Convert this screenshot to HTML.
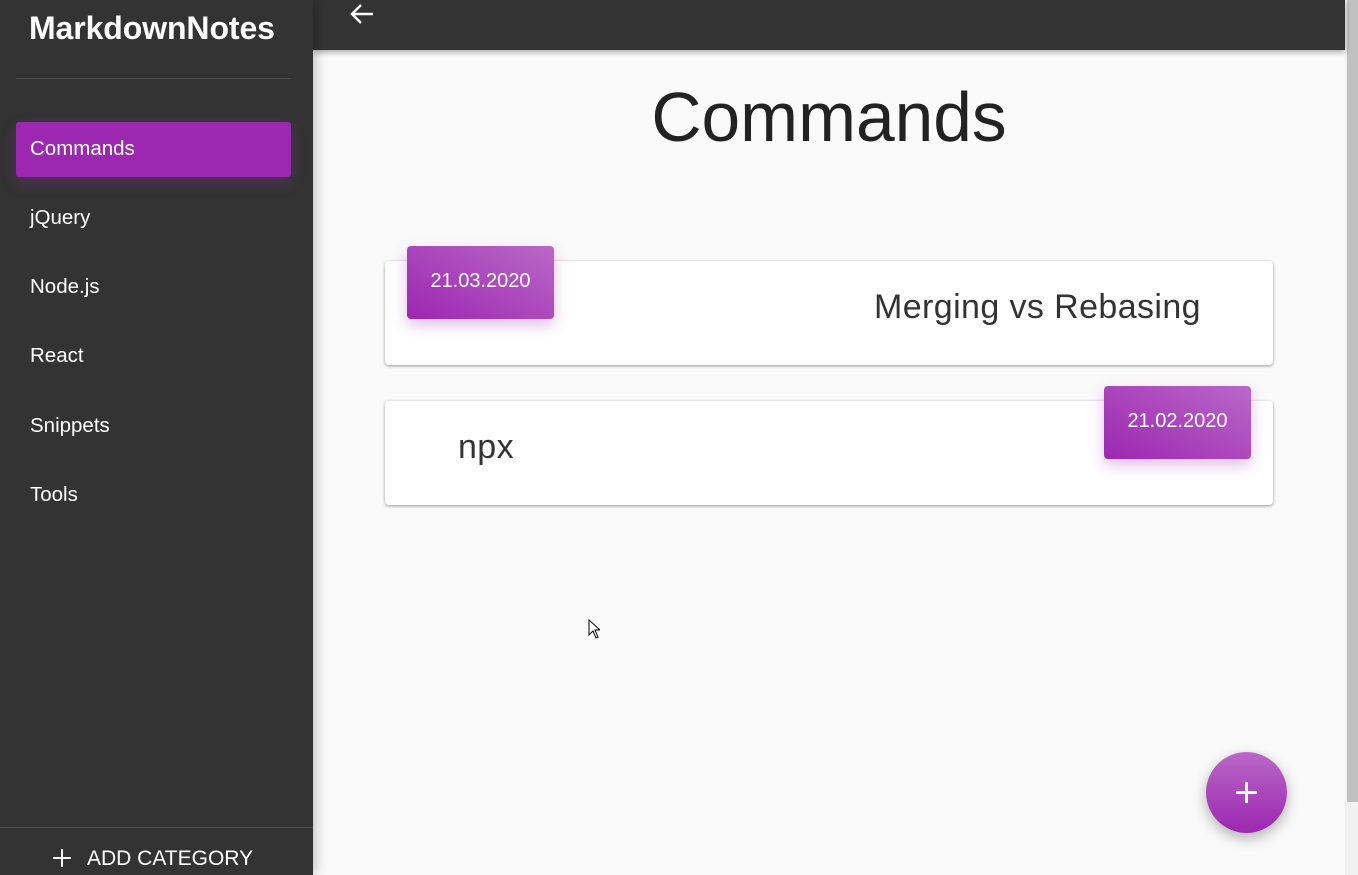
<!DOCTYPE html>
<html><head><meta charset="utf-8"><style>
*{box-sizing:border-box;margin:0;padding:0}
body{width:1358px;height:875px;overflow:hidden;background:#fafafa;font-family:"Liberation Sans",Arial,sans-serif;position:relative}
.side{position:absolute;left:0;top:0;width:313px;height:875px;background:#333;color:#fff;box-shadow:2px 0 12px rgba(0,0,0,.25);z-index:3}
.logo{position:absolute;left:29px;top:10px;font-size:32px;font-weight:bold;letter-spacing:-0.1px}
.hr{position:absolute;left:16px;top:78px;width:275px;height:1px;background:#4a4a4a}
.item{position:absolute;left:30px;font-size:20.5px}
.active{position:absolute;left:16px;top:122px;width:275px;height:55px;background:#9c27b0;border-radius:3px;box-shadow:0 6px 14px rgba(156,39,176,.3)}
.bot{position:absolute;left:0;top:827px;width:313px;height:1px;background:#4a4a4a}
.add{position:absolute;left:52px;top:847px;font-size:21px}
.top{position:absolute;left:313px;top:0;width:1032px;height:50px;background:#333;box-shadow:0 2px 6px rgba(0,0,0,.35);z-index:2}
h1{position:absolute;left:313px;width:1032px;top:77px;text-align:center;font-weight:normal;font-size:69.5px;color:#222}
.card{position:absolute;left:385px;width:888px;height:104px;background:#fff;border-radius:4px;box-shadow:0 1px 3px rgba(0,0,0,.4)}
.date{position:absolute;width:147px;height:73px;border-radius:4px;background:linear-gradient(30deg,#9c27b0,#ba68c8);color:#fff;font-size:20px;text-align:center;line-height:71px;box-shadow:0 6px 14px rgba(156,39,176,.3)}
.t{position:absolute;font-size:34px;letter-spacing:0.4px;color:#333}
.scroll{position:absolute;left:1345px;top:0;width:13px;height:875px;background:#f1f1f1}
.thumb{position:absolute;left:1347px;top:0;width:11px;height:802px;background:#c1c1c1}
.fab{position:absolute;left:1206px;top:752px;width:81px;height:81px;border-radius:50%;background:linear-gradient(#ba68c8,#9c27b0);box-shadow:0 5px 14px rgba(0,0,0,.3)}
</style></head><body>
<div class="side">
<div class="logo">MarkdownNotes</div>
<div class="hr"></div>
<div class="active"></div>
<div class="item" style="top:137px">Commands</div>
<div class="item" style="top:206px">jQuery</div>
<div class="item" style="top:275px">Node.js</div>
<div class="item" style="top:344px">React</div>
<div class="item" style="top:414px">Snippets</div>
<div class="item" style="top:483px">Tools</div>
<div class="bot"></div>
<svg style="position:absolute;left:52px;top:848px" width="20" height="20"><path d="M10 1V19M1 10H19" stroke="#fff" stroke-width="2"/></svg>
<div class="add" style="left:87px">ADD CATEGORY</div>
</div>
<div class="top"><svg style="position:absolute;left:36px;top:2px" width="26" height="24"><path d="M24 12H3M12 3L3 12L12 21" stroke="#fff" stroke-width="2.4" fill="none"/></svg></div>
<h1>Commands</h1>
<div class="card" style="top:261px"><div class="t" style="left:489px;top:27px">Merging vs Rebasing</div></div>
<div class="date" style="left:407px;top:246px">21.03.2020</div>
<div class="card" style="top:401px"><div class="t" style="left:73px;top:27px">npx</div></div>
<div class="date" style="left:1104px;top:386px">21.02.2020</div>
<div class="scroll"></div><div class="thumb"></div>
<div class="fab"><svg style="position:absolute;left:29px;top:29px" width="23" height="23"><path d="M11.5 1V22M1 11.5H22" stroke="#fff" stroke-width="3"/></svg></div>
<svg style="position:absolute;left:588px;top:619px" width="12" height="20"><path d="M1 1V16L5 12L8 19L10 18L7 11H12Z" fill="#fff" stroke="#000" stroke-width="1"/></svg>
</body></html>
